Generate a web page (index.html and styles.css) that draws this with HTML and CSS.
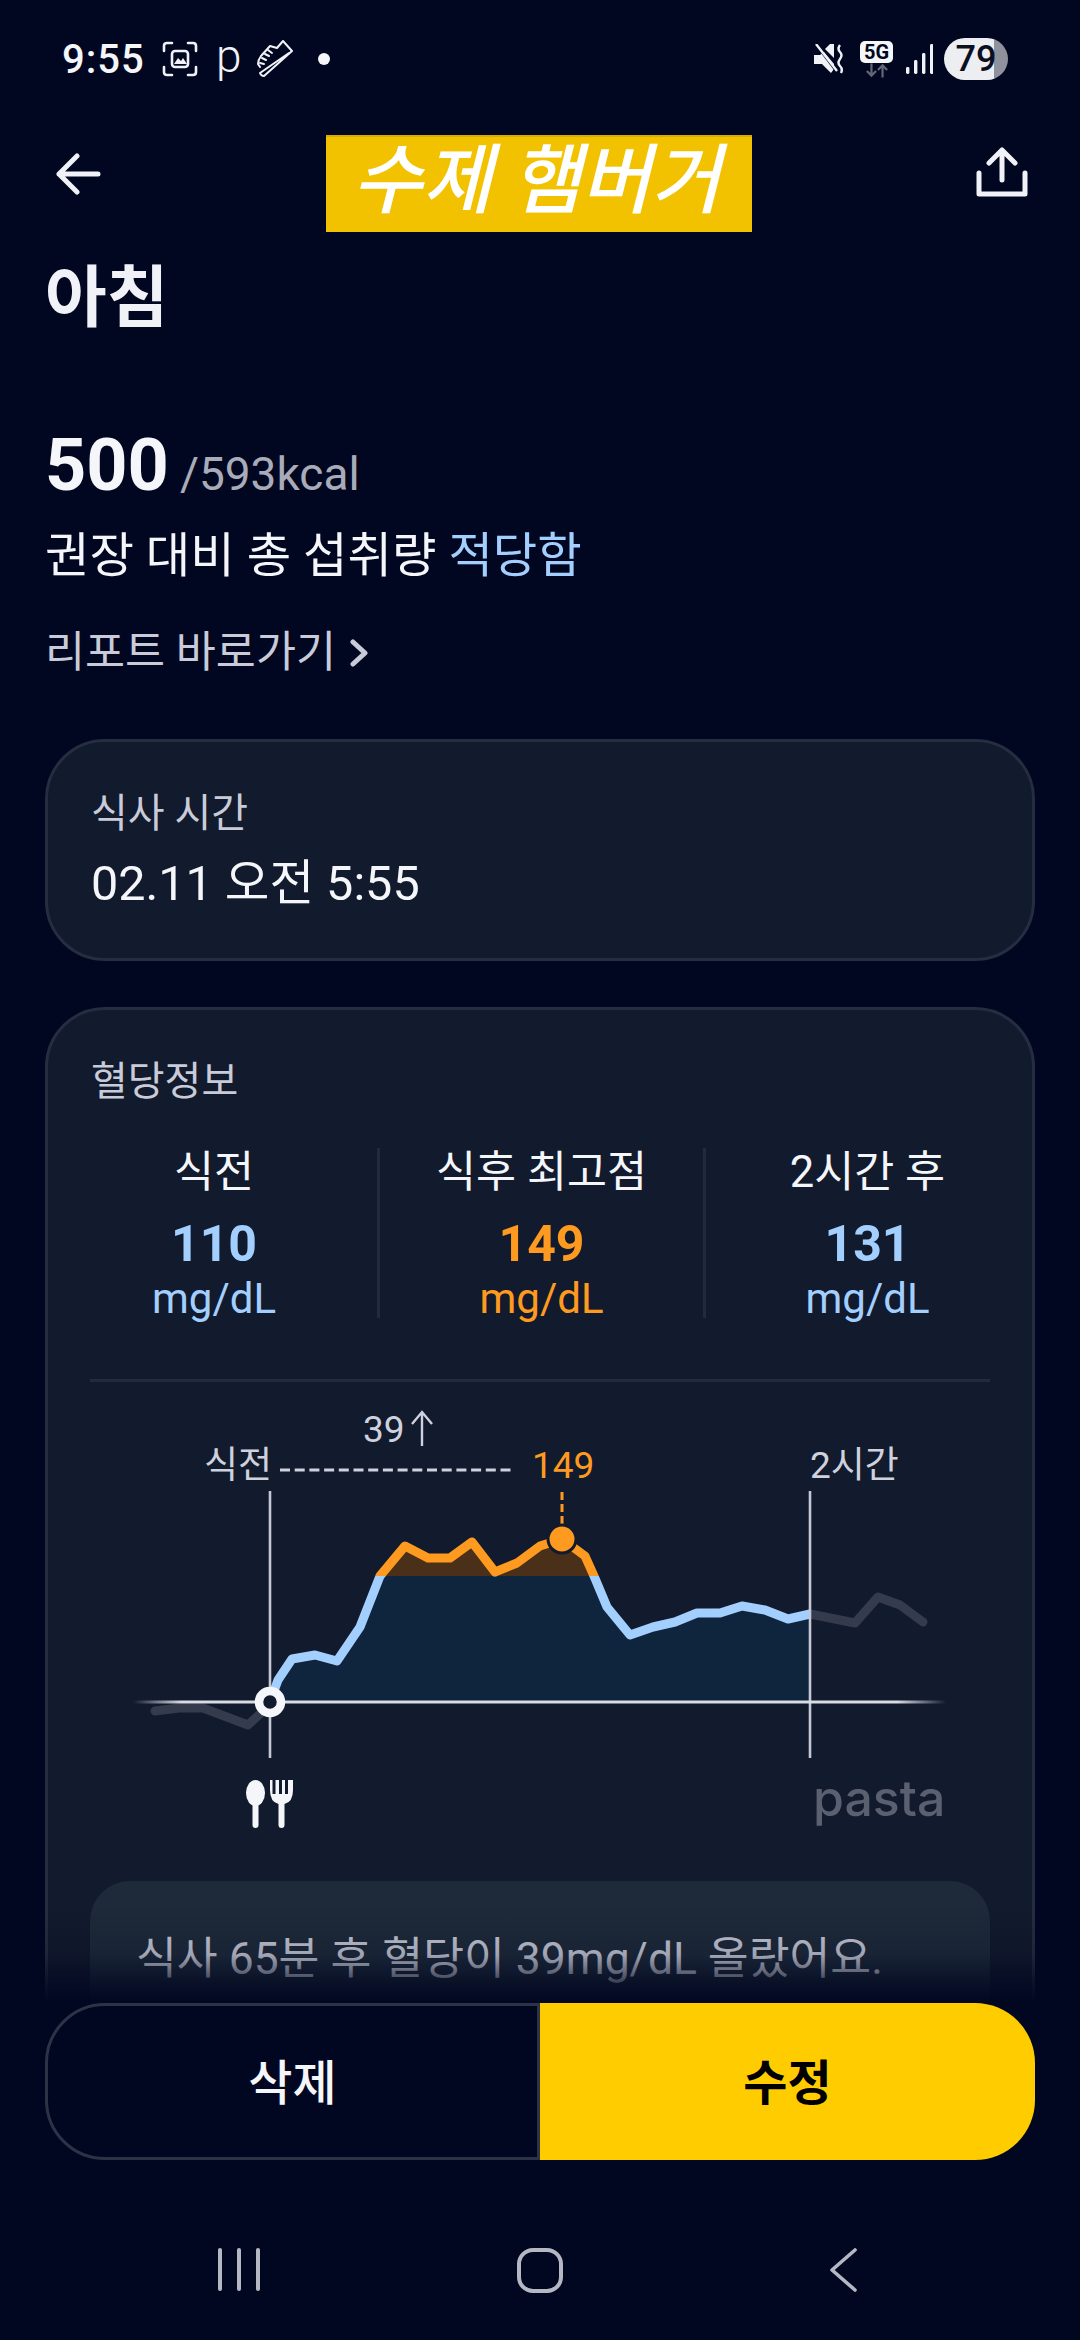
FILE: index.html
```html
<!DOCTYPE html>
<html lang="ko">
<head>
	<meta charset="UTF-8">
	<title>수제 햄버거</title>
	<link rel="stylesheet" href="styles.css">
</head>
<body>
<main class="page">
	<div class="status">
		<div class="status-left">
			<span class="clock">9:55</span>
			<svg class="ic-shot" viewBox="0 0 36 36" fill="none" stroke="#f1f2f7" stroke-width="2.6" stroke-linecap="round">
				<path d="M2 10V5Q2 2 5 2H10M26 2H31Q34 2 34 5V10M34 26V31Q34 34 31 34H26M10 34H5Q2 34 2 31V26"/>
				<rect x="10" y="10" width="16" height="16" rx="3"/>
				<path d="M12 23L16 17L19 20L21 17L25 23Z" fill="#f1f2f7" stroke="none"/>
			</svg>
			<span class="status-p">p</span>
			<svg class="ic-shoe" viewBox="0 0 38 38" fill="none" stroke="#f1f2f7" stroke-width="2" stroke-linejoin="round" stroke-linecap="round">
				<path d="M4 27L2 24Q2 20 5 16L14 6L21 8L27 1L36 11L8 36Q5 36 4 33L33 13"/>
				<path d="M12 10L16 13M9 14L13 16M6 18L10 20M4 23L8 24"/>
			</svg>
			<span class="status-dot"></span>
		</div>
		<div class="status-right">
			<svg class="ic-mute" viewBox="0 0 30 30" fill="#f1f2f7">
				<path d="M0 11H6L10 8L20 20V25L17 29L8 20H0Z"/>
				<path d="M11 5L16 0H20V14Z"/>
				<path d="M2 1L21 26" stroke="#010720" stroke-width="2"/>
				<path d="M2 0L23 27" stroke="#f1f2f7" stroke-width="2.4"/>
				<path d="M26 1Q23 5 26 8T26 15T26 22T27 29" fill="none" stroke="#f1f2f7" stroke-width="2.4"/>
			</svg>
			<div class="net">
				<span class="net-badge">5G</span>
				<svg class="ic-arrows" viewBox="0 0 26 15" fill="none" stroke="#626778" stroke-width="2.4">
					<path d="M7 0V13M2 8L7 13L12 8M19 15V2M14 7L19 2L24 7"/>
				</svg>
			</div>
			<svg class="ic-signal" viewBox="0 0 27 30" fill="#f1f2f7">
				<rect x="0" y="23" width="3.4" height="7" rx="1.4"/>
				<rect x="8" y="16" width="3.4" height="14" rx="1.4"/>
				<rect x="16" y="9" width="3.4" height="21" rx="1.4"/>
				<rect x="24" y="0" width="3.4" height="30" rx="1.4"/>
			</svg>
			<span class="battery">79</span>
		</div>
	</div>

	<div class="topbar">
		<svg class="ic-back" viewBox="0 0 46 42" fill="none" stroke="#f1f2f7" stroke-width="5" stroke-linecap="round" stroke-linejoin="round">
			<path d="M43 21H4M22 3L4 21L22 39"/>
		</svg>
		<div class="title">수제 햄버거</div>
		<svg class="ic-share" viewBox="0 0 52 50" fill="none" stroke="#f1f2f7" stroke-width="5" stroke-linecap="round" stroke-linejoin="round">
			<path d="M26 4V33M13 16L26 3L39 16"/>
			<path d="M3 26V47H49V26"/>
		</svg>
	</div>

	<section class="summary">
		<h1>아침</h1>
		<div class="kcal"><b>500</b><span>/593kcal</span></div>
		<p class="compare">권장 대비 총 섭취량 <em>적당함</em></p>
		<a class="report">리포트 바로가기
			<svg class="ic-chev" viewBox="0 0 18 28" fill="none" stroke="#c9ccd8" stroke-width="5" stroke-linecap="round" stroke-linejoin="round">
				<path d="M3 3L15 14L3 25"/>
			</svg>
		</a>
	</section>

	<section class="card time-card">
		<div class="card-label">식사 시간</div>
		<div class="time-value">02.11 오전 5:55</div>
	</section>

	<section class="card sugar-card">
		<div class="card-label">혈당정보</div>
		<div class="stats">
			<div class="stat">
				<div class="stat-name">식전</div>
				<div class="stat-num blue">110</div>
				<div class="stat-unit blue">mg/dL</div>
			</div>
			<div class="stat">
				<div class="stat-name">식후 최고점</div>
				<div class="stat-num orange">149</div>
				<div class="stat-unit orange">mg/dL</div>
			</div>
			<div class="stat">
				<div class="stat-name">2시간 후</div>
				<div class="stat-num blue">131</div>
				<div class="stat-unit blue">mg/dL</div>
			</div>
		</div>
		<div class="rule"></div>

		<!-- viewBox uses page coordinates so the points read straight off the screenshot -->
		<svg class="chart" viewBox="48 1390 984 480">
			<defs>
				<linearGradient id="axisFade" gradientUnits="userSpaceOnUse" x1="133" y1="0" x2="946" y2="0">
					<stop offset="0" stop-color="#d9dbe5" stop-opacity="0"/>
					<stop offset="0.06" stop-color="#d9dbe5"/>
					<stop offset="0.94" stop-color="#d9dbe5"/>
					<stop offset="1" stop-color="#d9dbe5" stop-opacity="0"/>
				</linearGradient>
				<clipPath id="overLine"><rect x="48" y="1390" width="984" height="186"/></clipPath>
				<clipPath id="underLine"><rect x="48" y="1576" width="984" height="300"/></clipPath>
			</defs>

			<text class="chart-text" x="363" y="1442">39</text>
			<path d="M422 1446V1413M412 1424L422 1412L432 1424" fill="none" stroke="#cfd2de" stroke-width="2.4"/>
			<text class="chart-text" x="204" y="1478">식전</text>
			<path d="M280 1470H513" stroke="#cfd2de" stroke-width="3" stroke-dasharray="10 4.7"/>
			<text class="chart-text orange-fill" x="532" y="1478">149</text>
			<text class="chart-text" x="810" y="1478">2시간</text>

			<polygon class="area-low" clip-path="url(#underLine)" points="270,1702 278,1680 292,1659 315,1655 337,1661 360,1627 380,1576 405,1546 428,1558 450,1558 472,1542 495,1572 517,1563 540,1546 562,1539 585,1556 594,1576 607,1607 630,1635 653,1627 675,1622 697,1613 720,1613 742,1606 765,1610 788,1619 810,1614 810,1702"/>
			<polygon class="area-high" clip-path="url(#overLine)" points="380,1576 405,1546 428,1558 450,1558 472,1542 495,1572 517,1563 540,1546 562,1539 585,1556 594,1576"/>

			<polyline class="line-rest" points="155,1711 179,1708 203,1708 248,1725 262,1712 270,1702"/>
			<polyline class="line-rest" points="810,1614 855,1623 878,1597 900,1605 923,1622"/>
			<polyline class="line-blue" clip-path="url(#underLine)" points="270,1702 278,1680 292,1659 315,1655 337,1661 360,1627 380,1576 405,1546 428,1558 450,1558 472,1542 495,1572 517,1563 540,1546 562,1539 585,1556 594,1576 607,1607 630,1635 653,1627 675,1622 697,1613 720,1613 742,1606 765,1610 788,1619 810,1614"/>
			<polyline class="line-orange" clip-path="url(#overLine)" points="360,1627 380,1576 405,1546 428,1558 450,1558 472,1542 495,1572 517,1563 540,1546 562,1539 585,1556 594,1576 607,1607"/>

			<path d="M270 1491V1758M810 1491V1758" stroke="#c5c8d4" stroke-width="2.6"/>
			<path d="M133 1702H946" stroke="url(#axisFade)" stroke-width="3" fill="none"/>
			<path d="M562 1492V1524" stroke="#ff9a20" stroke-width="3" stroke-dasharray="8 4"/>
			<circle cx="562" cy="1539" r="14" fill="#ff9a20" stroke="#121a2d" stroke-width="3"/>
			<circle cx="270" cy="1702" r="11" fill="#121a2d" stroke="#f5f6fa" stroke-width="8.5"/>

			<g fill="#f5f6fa">
				<ellipse cx="255.500" cy="1793" rx="9.500" ry="13"/>
				<rect x="252.500" y="1800" width="6" height="28" rx="3"/>
				<path d="M270 1780H272.500V1794H275.500V1780H279V1794H282V1780H285V1794H288V1780H293V1790Q293 1802 284.500 1804V1825Q284.500 1828 281.500 1828Q278.500 1828 278.500 1825V1804Q270 1802 270 1790Z"/>
			</g>
			<text class="chart-logo" x="813" y="1816">pasta</text>
		</svg>

		<div class="note">식사 65분 후 혈당이 39mg/dL 올랐어요.</div>
	</section>

	<div class="bottom">
		<div class="actions">
			<button class="btn btn-del" type="button">삭제</button>
			<button class="btn btn-edit" type="button">수정</button>
		</div>
		<nav class="navbar">
			<span class="nav-lines"><i></i><i></i><i></i></span>
			<span class="nav-home"></span>
			<svg class="nav-back" viewBox="0 0 28 44" fill="none" stroke="#b5b8c2" stroke-width="3.600" stroke-linecap="round" stroke-linejoin="round">
				<path d="M26 2L3 22L26 42"/>
			</svg>
		</nav>
	</div>
</main>
</body>
</html>
```

FILE: styles.css
```css
*{
	box-sizing: border-box;
}

html, body{
	margin: 0;
	padding: 0;
	background: #010720;
}

body{
	font-family: Roboto, "Noto Sans CJK KR", sans-serif;
	color: #f5f6fa;
}

.page{
	position: relative;
	width: 1080px;
	height: 2340px;
	overflow: hidden;
	background: #010720;
}

/* status bar */
.status{
	display: flex;
	align-items: center;
	justify-content: space-between;
	height: 118px;
	padding: 0 72px 0 62px;
}

.status-left, .status-right{
	display: flex;
	align-items: center;
}

.clock{
	font-size: 40px;
	font-weight: 500;
	letter-spacing: 1px;
	color: #f5f6fa;
	width: 100px;
}

.ic-shot{
	width: 36px;
	height: 36px;
}

.status-p{
	font-size: 46px;
	font-weight: 300;
	line-height: 36px;
	margin: -6px 0 0 18px;
	width: 26px;
	color: #f1f2f7;
}

.ic-shoe{
	width: 38px;
	height: 38px;
	margin-left: 14px;
}

.status-dot{
	width: 12px;
	height: 12px;
	border-radius: 50%;
	background: #f5f6fa;
	margin-left: 24px;
}

.ic-mute{
	width: 30px;
	height: 30px;
}

.net{
	display: flex;
	flex-direction: column;
	align-items: center;
	margin-left: 16px;
}

.net-badge{
	width: 33px;
	height: 22px;
	border-radius: 5px;
	background: #f5f6fa;
	color: #010720;
	font-size: 20px;
	font-weight: 700;
	line-height: 22px;
	text-align: center;
}

.ic-arrows{
	width: 24px;
	height: 15px;
}

.ic-signal{
	width: 27px;
	height: 30px;
	margin-left: 13px;
}

.battery{
	width: 64px;
	height: 42px;
	margin-left: 11px;
	border-radius: 21px;
	background: linear-gradient(to right, #eceef2 50px, #8f929c 50px);
	color: #0b1020;
	font-size: 36px;
	font-weight: 500;
	line-height: 42px;
	text-align: center;
}

/* header */
.topbar{
	display: flex;
	align-items: center;
	justify-content: space-between;
	height: 97px;
	margin-top: 17px;
	padding: 0 52px 0 55px;
}

.ic-back{
	width: 46px;
	height: 42px;
	margin-top: -20px;
}

.ic-share{
	width: 52px;
	height: 50px;
	margin-top: -24px;
}

.title{
	width: 426px;
	height: 97px;
	padding-right: 4px;
	background: #f2c200;
	border-top: 2px solid #d9ad00;
	color: #fff;
	font-size: 76px;
	font-weight: 500;
	font-style: italic;
	line-height: 88px;
	text-align: center;
	white-space: nowrap;
}

/* summary */
.summary{
	padding: 0 45px;
}

h1{
	margin: 28px 0 0;
	font-size: 67px;
	font-weight: 700;
	line-height: 76px;
	color: #f1f2f7;
}

.kcal{
	display: flex;
	align-items: baseline;
	margin-top: 88px;
	height: 84px;
	line-height: 84px;
}

.kcal b{
	font-size: 72px;
	font-weight: 700;
}

.kcal span{
	margin-left: 11px;
	font-size: 46px;
	color: #a9acb8;
}

.compare{
	margin: 18px 0 0;
	font-size: 48.300px;
	line-height: 60px;
}

.compare em{
	font-style: normal;
	color: #a3cfff;
}

.report{
	display: flex;
	align-items: center;
	gap: 14px;
	margin-top: 41px;
	font-size: 43.500px;
	line-height: 52px;
	color: #c9ccd8;
}

.ic-chev{
	width: 18px;
	height: 28px;
}

/* cards */
.card{
	margin: 0 45px;
	background: #121a2d;
	border: 3px solid #252d40;
	border-radius: 60px;
}

.card-label{
	padding-left: 43px;
	font-size: 40px;
	line-height: 50px;
	color: #c9ccd8;
}

.time-card{
	height: 222px;
	margin-top: 60px;
	padding-top: 47px;
}

.time-value{
	padding-left: 43px;
	margin-top: 17px;
	font-size: 48.500px;
	line-height: 56px;
}

.sugar-card{
	height: 1200px;
	margin-top: 46px;
	padding-top: 47px;
	border-radius: 60px 60px 0 0;
}

.stats{
	display: grid;
	grid-template-columns: repeat(3, 1fr);
	margin: 41px 3px 0;
}

.stat{
	height: 170px;
	text-align: center;
	border-left: 3px solid #222a3c;
}

.stat:first-child{
	border-left: 0;
}

.stat-name{
	font-size: 43.500px;
	line-height: 50px;
}

.stat-num{
	margin-top: 19px;
	font-size: 50px;
	font-weight: 700;
	line-height: 55px;
}

.stat-unit{
	margin-top: 2px;
	font-size: 42px;
	line-height: 50px;
}

.blue{
	color: #a3cfff;
}

.orange{
	color: #ff9a20;
}

.rule{
	height: 3px;
	margin: 61px 42px 0;
	background: #222a3c;
}

.chart{
	display: block;
	width: 984px;
	height: 480px;
	margin-top: 8px;
}

.chart-text{
	font-size: 37px;
	fill: #cfd2de;
}

.chart-text.orange-fill{
	fill: #ff9a20;
}

.chart-logo{
	font-family: Inter, sans-serif;
	font-size: 50px;
	font-weight: 500;
	fill: #5b6070;
}

.area-low{
	fill: #0f243d;
}

.area-high{
	fill: #4a3019;
}

.line-rest, .line-blue, .line-orange{
	fill: none;
	stroke-width: 9;
	stroke-linejoin: round;
}

.line-rest{
	stroke: #333b4d;
	stroke-linecap: round;
}

.line-blue{
	stroke: #a3cfff;
}

.line-orange{
	stroke: #ff9a20;
}

.note{
	height: 240px;
	margin: 11px 42px 0;
	padding: 50px 46px 0;
	border-radius: 40px;
	background: #1e2a3a;
	font-size: 44.400px;
	line-height: 56px;
	color: #c9ccd8;
	white-space: nowrap;
}

/* fixed bottom part, lies over the scrolled content */
.bottom{
	position: absolute;
	left: 0;
	right: 0;
	bottom: 0;
	padding-top: 98px;
	background: linear-gradient(to bottom, rgba(1, 7, 32, 0) 0, rgba(1, 7, 32, 0.2) 50px, rgba(1, 7, 32, 0.8) 82px, #010720 98px);
}

.actions{
	display: flex;
	height: 157px;
	margin: 0 45px;
}

.btn{
	flex: none;
	width: 50%;
	font-family: inherit;
	font-size: 48px;
	font-weight: 700;
	padding: 0 0 6px;
}

.btn-del{
	background: #010720;
	color: #f5f6fa;
	border: 3px solid #2d3347;
	border-radius: 60px 0 0 60px;
	font-weight: 500;
}

.btn-edit{
	background: #ffcc00;
	color: #000;
	border: 0;
	border-radius: 0 60px 60px 0;
}

.navbar{
	display: flex;
	align-items: flex-start;
	height: 180px;
	padding: 88px 223px 0 218px;
	justify-content: space-between;
}

.nav-lines{
	display: flex;
	gap: 15px;
	width: 43px;
}

.nav-lines i{
	width: 4px;
	height: 43px;
	background: #b5b8c2;
	border-radius: 2px;
}

.nav-home{
	width: 46px;
	height: 45px;
	margin-right: 10px;
	border: 4px solid #b5b8c2;
	border-radius: 16px;
}

.nav-back{
	width: 28px;
	height: 44px;
}
```
